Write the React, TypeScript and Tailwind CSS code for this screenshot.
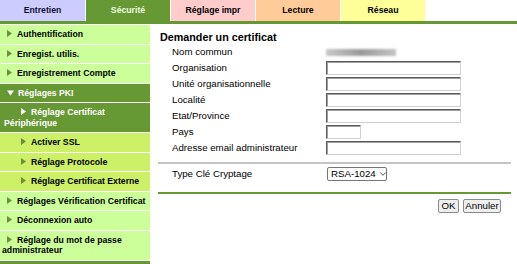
import React from 'react';
import { ChevronDown } from 'lucide-react';

const tabs = [
    { label: 'Entretien', cls: 'w-[85px] bg-[#ccccff] text-[#111133]' },
    { label: 'Sécurité', cls: 'w-[84px] bg-[#669933] text-[#eefbe0]' },
    { label: 'Réglage impr', cls: 'w-[84px] bg-[#ffcccc] text-black' },
    { label: 'Lecture', cls: 'w-[84px] bg-[#ffcc99] text-black' },
    { label: 'Réseau', cls: 'w-[84px] bg-[#ffff99] text-black' },
];

type NavItem = { label: string; level: 0 | 1; tone: 'light' | 'dark' | 'sub'; open?: boolean };

const navItems: NavItem[] = [
    { label: 'Authentification', level: 0, tone: 'light' },
    { label: 'Enregist. utilis.', level: 0, tone: 'light' },
    { label: 'Enregistrement Compte', level: 0, tone: 'light' },
    { label: 'Réglages PKI', level: 0, tone: 'dark', open: true },
    { label: 'Réglage Certificat Périphérique', level: 1, tone: 'dark' },
    { label: 'Activer SSL', level: 1, tone: 'sub' },
    { label: 'Réglage Protocole', level: 1, tone: 'sub' },
    { label: 'Réglage Certificat Externe', level: 1, tone: 'sub' },
    { label: 'Réglages Vérification Certificat', level: 0, tone: 'light' },
    { label: 'Déconnexion auto', level: 0, tone: 'light' },
    { label: 'Réglage du mot de passe administrateur', level: 0, tone: 'light' },
];

const fields = [
    { label: 'Organisation', w: 'w-[135px]' },
    { label: 'Unité organisationnelle', w: 'w-[135px]' },
    { label: 'Localité', w: 'w-[135px]' },
    { label: 'Etat/Province', w: 'w-[135px]' },
    { label: 'Pays', w: 'w-[35px]' },
    { label: 'Adresse email administrateur', w: 'w-[135px]' },
];

const Arrow = ({ open, color }: { open?: boolean; color: string }) =>
    open ? (
        <svg width="7" height="6" viewBox="0 0 7 6" className="inline-block mr-[4px] align-[0px]">
            <polygon points="0,0.5 7,0.5 3.5,5.5" fill={color} />
        </svg>
    ) : (
        <svg width="5" height="7" viewBox="0 0 5 7" className="inline-block mr-[5px] align-[0px]">
            <polygon points="0,0 5,3.5 0,7" fill={color} />
        </svg>
    );

const toneCls = {
    light: 'bg-[#ccff99] text-black',
    dark: 'bg-[#669933] text-white',
    sub: 'bg-[#ccf066] text-black',
};

export default function App() {
    return (
        <div className="w-[517px] h-[264px] overflow-hidden bg-white font-['Liberation_Sans',Arial,sans-serif]">
            {/* Top tabs */}
            <div className="flex gap-[1px] h-[21px]">
                {tabs.map(t => (
                    <div key={t.label} className={`${t.cls} flex items-center justify-center text-[8.7px] font-bold`}>
                        {t.label}
                    </div>
                ))}
            </div>
            <div className="h-[3px] bg-[#669933]" />

            <div className="flex mt-[1px]">
                {/* Side menu */}
                <div className="w-[150px] shrink-0 flex flex-col">
                    {navItems.map(item => (
                        <div
                            key={item.label}
                            className={`${toneCls[item.tone]} border-b border-white py-[4px] text-[8.7px] font-bold leading-[10.5px] ${item.level === 0 ? 'pl-[2px] indent-[5px]' : 'pl-[4px] indent-[17px]'}`}
                        >
                            <Arrow open={item.open} color={item.tone === 'dark' ? '#ffffff' : '#6f8f3c'} />
                            {item.label}
                        </div>
                    ))}
                    <div className="h-[3px] bg-[#669933]" />
                </div>

                {/* Main form */}
                <div className="ml-[8px] w-[353px] text-[9.7px] text-black">
                    <div className="pt-[5px] pl-[2px] leading-[14px] text-[10.75px] font-bold">Demander un certificat</div>

                    <div className="flex items-center h-[16px]">
                        <div className="w-[168px] pl-[14px]">Nom commun</div>
                        <div className="w-[70px] h-[7px] bg-gradient-to-r from-[#c9c9c9] via-[#9a9a9a] to-[#c4c4c4] blur-[1px]" />
                    </div>
                    {fields.map(f => (
                        <div key={f.label} className="flex items-center h-[16px]">
                            <div className="w-[168px] pl-[14px]">{f.label}</div>
                            <div className={`${f.w} h-[14px] bg-white border border-t-[#5a5a5a] border-l-[#5a5a5a] border-r-[#d0d0d0] border-b-[#d0d0d0] shadow-[inset_1px_1px_0_#a0a0a0]`} />
                        </div>
                    ))}

                    <div className="mt-[6px] h-[2px] bg-[#c4c4c4]" />
                    <div className="flex items-center h-[20px]">
                        <div className="w-[169px] pl-[14px]">Type Clé Cryptage</div>
                        <div className="w-[60px] h-[14px] border border-[#767676] rounded-[2px] flex items-center gap-[2px] pl-[3px] whitespace-nowrap">
                            <span className="shrink-0 leading-none">RSA-1024</span>
                            <ChevronDown size={10} strokeWidth={2} className="shrink-0 text-[#333]" />
                        </div>
                    </div>

                    <div className="mt-[8px] h-[2px] bg-[#669933]" />
                    <div className="flex justify-end gap-[4px] mt-[5px] pr-[10px]">
                        <button className="h-[14px] w-[21px] bg-[#efefef] border border-[#8a8a8a] rounded-[2px] leading-none">OK</button>
                        <button className="h-[14px] w-[38px] bg-[#efefef] border border-[#8a8a8a] rounded-[2px] leading-none">Annuler</button>
                    </div>
                </div>
            </div>
        </div>
    );
}
